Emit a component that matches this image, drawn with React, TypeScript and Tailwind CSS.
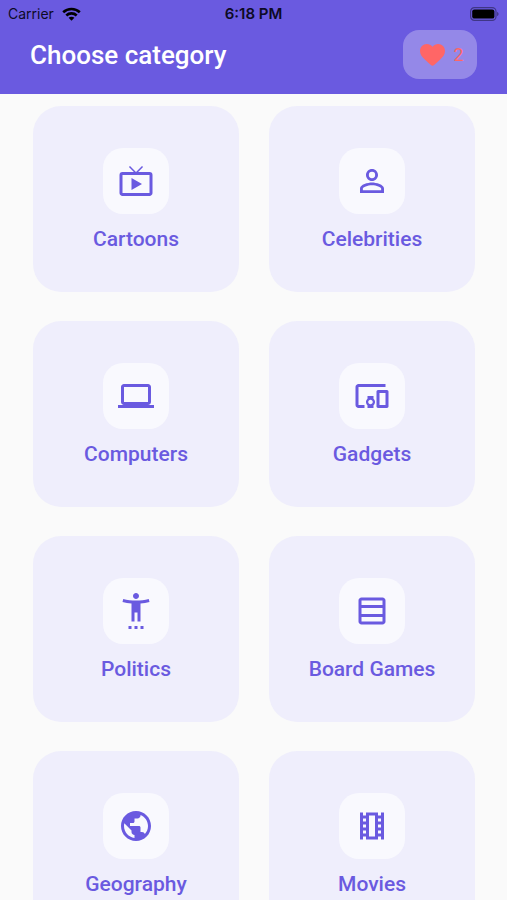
// src/screens/Categories.tsx
import { useState } from "react";
import type { IconType } from "react-icons";
import {
  MdComputer,
  MdDevicesOther,
  MdLiveTv,
  MdOutlineTableRows,
  MdOutlineTheaters,
  MdPersonOutline,
  MdPublic,
  MdSettingsAccessibility,
} from "react-icons/md";

type Category = {
  name: string;
  icon: IconType;
};

const categories: Category[] = [
  { name: "Cartoons", icon: MdLiveTv },
  { name: "Celebrities", icon: MdPersonOutline },
  { name: "Computers", icon: MdComputer },
  { name: "Gadgets", icon: MdDevicesOther },
  { name: "Politics", icon: MdSettingsAccessibility },
  { name: "Board Games", icon: MdOutlineTableRows },
  { name: "Geography", icon: MdPublic },
  { name: "Movies", icon: MdOutlineTheaters },
];

function StatusBar() {
  return (
    <div className="grid h-7 grid-cols-3 items-center px-2 font-['Inter',sans-serif] text-sm text-[#0d0a26]">
      <div className="flex items-center gap-2">
        <span>Carrier</span>
        <svg className="h-3.5 w-[19px]" viewBox="0 0 19 14" fill="none" stroke="#000" strokeWidth="2.6">
          <path d="M1.2 5.3C5.8.9 13.2.9 17.8 5.3" />
          <path d="M4.3 8.5C7.2 5.7 11.8 5.7 14.7 8.5" />
          <path d="M9.5 13.7L6.6 10.8C8.2 9.3 10.8 9.3 12.4 10.8Z" fill="#000" stroke="none" />
        </svg>
      </div>
      <span className="text-center text-[15px] font-semibold">6:18 PM</span>
      <svg className="h-3.5 w-[29px] justify-self-end" viewBox="0 0 29 14">
        <rect x="0.6" y="0.6" width="25.4" height="12.8" rx="3.8" fill="none" stroke="#000" strokeOpacity="0.4" strokeWidth="1.2" />
        <rect x="2.2" y="2.4" width="22.2" height="9.2" rx="2.2" fill="#000" />
        <path d="M27.2 5c1.7.5 1.7 3.5 0 4z" fill="#000" fillOpacity="0.45" />
      </svg>
    </div>
  );
}

function Heart() {
  return (
    <svg className="h-[22px] w-[25px]" viewBox="0 0 25 22" fill="currentColor">
      <path d="M12.5 2.7C10.9.9 9 0 6.9 0 3 0 0 3 0 6.9c0 3.5 2.1 6.1 5.3 9l5.6 5.2c.9.9 2.3.9 3.2 0l5.6-5.2c3.2-2.9 5.3-5.5 5.3-9C25 3 22 0 18.1 0 16 0 14.1.9 12.5 2.7z" />
    </svg>
  );
}

function CategoryCard({ category, onSelect }: { category: Category; onSelect: () => void }) {
  const Icon = category.icon;

  return (
    <button
      type="button"
      onClick={onSelect}
      className="flex h-[186px] flex-col items-center justify-center gap-3 rounded-[28px] bg-[#efeefc] pt-0.5 text-[#6a5ae0]"
    >
      <span className="flex size-[66px] items-center justify-center rounded-[20px] bg-[#f9f9fe]">
        <Icon className="size-9" />
      </span>
      <span className="text-[21px] leading-[26px] font-medium">{category.name}</span>
    </button>
  );
}

export default function App() {
  const [, setSelected] = useState<string | null>(null);
  const lives = 2;

  return (
    <div className="flex h-dvh flex-col bg-[#fafafa] font-['Roboto',sans-serif]">
      <header className="bg-[#6a5ae0] pb-[15px]">
        <StatusBar />
        <div className="mt-0.5 flex items-center justify-between px-[30px]">
          <h1 className="text-[26px] leading-8 font-medium text-white">Choose category</h1>
          <div className="flex h-[49px] w-[74px] items-center justify-center gap-2 rounded-2xl bg-[#9488e8] pl-1 text-[#ff6666]">
            <Heart />
            <span className="text-lg">{lives}</span>
          </div>
        </div>
      </header>

      <main className="flex-1 overflow-y-auto py-3 pr-8 pl-[33px] [scrollbar-width:none]">
        <div className="grid grid-cols-2 gap-x-[30px] gap-y-[29px]">
          {categories.map((category) => (
            <CategoryCard
              key={category.name}
              category={category}
              onSelect={() => setSelected(category.name)}
            />
          ))}
        </div>
      </main>
    </div>
  );
}
